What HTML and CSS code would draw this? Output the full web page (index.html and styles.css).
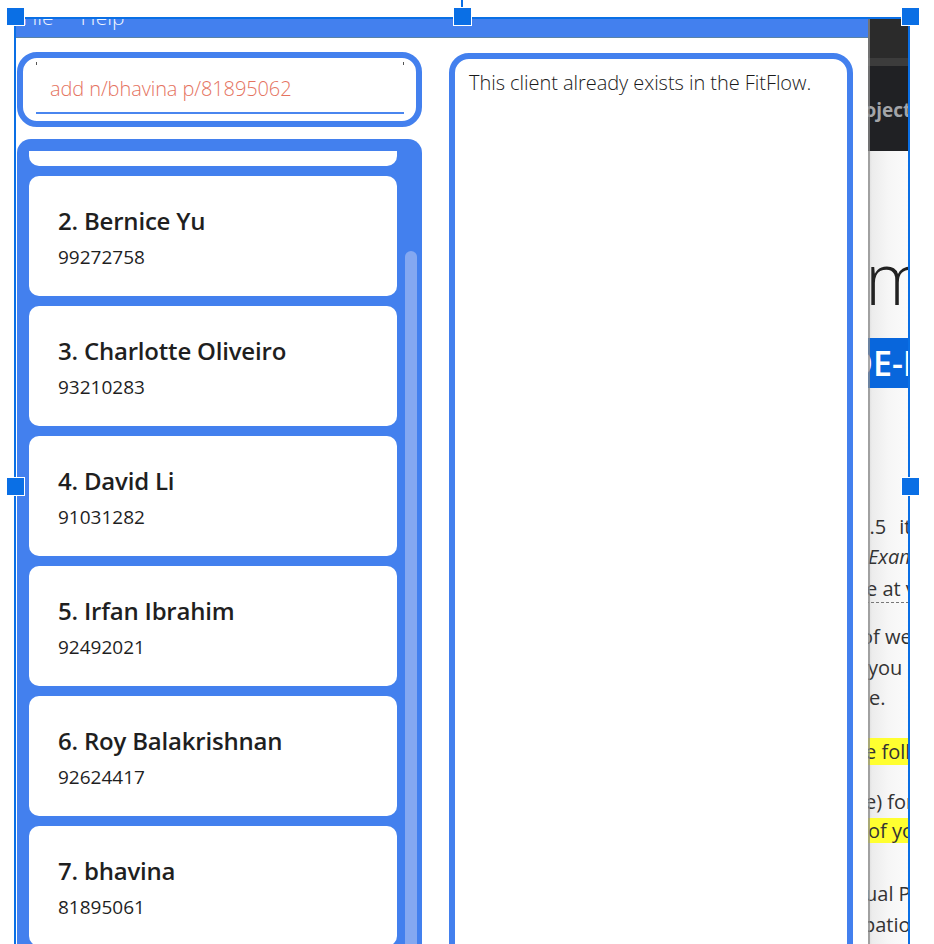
FILE: index.html
```html
<!DOCTYPE html>
<html>
<head>
<meta charset="utf-8">
<title>FitFlow</title>
<link rel="stylesheet" href="styles.css">
</head>
<body>
<div class="desk">
  <div class="app">
    <div class="menubar">
      <span class="menu menu-file">File</span>
      <span class="menu">Help</span>
    </div>
    <div class="app-body">
      <div class="left-col">
        <div class="cmd-box">
          <div class="cmd-field">
            <span class="cmd-text">add n/bhavina p/81895062</span>
          </div>
        </div>
        <div class="list-panel">
          <div class="list-viewport">
            <div class="card card-first">
              <div class="card-name">1. Alex Yeoh</div>
              <div class="card-phone">87438807</div>
            </div>
            <div class="card">
              <div class="card-name">2. Bernice Yu</div>
              <div class="card-phone">99272758</div>
            </div>
            <div class="card">
              <div class="card-name">3. Charlotte Oliveiro</div>
              <div class="card-phone">93210283</div>
            </div>
            <div class="card">
              <div class="card-name">4. David Li</div>
              <div class="card-phone">91031282</div>
            </div>
            <div class="card">
              <div class="card-name">5. Irfan Ibrahim</div>
              <div class="card-phone">92492021</div>
            </div>
            <div class="card">
              <div class="card-name">6. Roy Balakrishnan</div>
              <div class="card-phone">92624417</div>
            </div>
            <div class="card">
              <div class="card-name">7. bhavina</div>
              <div class="card-phone">81895061</div>
            </div>
          </div>
          <div class="scroll-track"><div class="scroll-thumb"></div></div>
        </div>
      </div>
      <div class="result-panel">
        <p class="result-text">This client already exists in the FitFlow.</p>
      </div>
    </div>
  </div>
  <div class="browser">
    <div class="br-tabs"></div>
    <div class="br-sep"></div>
    <div class="br-nav"><span class="br-title">Project</span></div>
    <div class="br-page">
      <div class="pg-row pg-big">m</div>
      <div class="pg-row pg-band"><span class="band-text">DE-IT</span></div>
      <div class="pg-row pg-p1">1.5<span class="gap-it">it</span></div>
      <div class="pg-row pg-em">Example</div>
      <div class="pg-row pg-dash"><span class="dash">e at version</span></div>
      <div class="pg-row pg-of">of weeks</div>
      <div class="pg-row pg-you">you can</div>
      <div class="pg-row pg-e">ie.</div>
      <div class="pg-row pg-hl1">e follow</div>
      <div class="pg-row pg-for">e) for</div>
      <div class="pg-row pg-hl2">of your</div>
      <div class="pg-row pg-ual">ual Plan</div>
      <div class="pg-row pg-pat">pation</div>
    </div>
  </div>
</div>

<div class="frame">
  <div class="rot-line"></div>
  <div class="handle h-tl"></div>
  <div class="handle h-tm"></div>
  <div class="handle h-tr"></div>
  <div class="handle h-ml"></div>
  <div class="handle h-mr"></div>
</div>
</body>
</html>
```

FILE: styles.css
```css
* { box-sizing: border-box; }

html, body {
  margin: 0;
  padding: 0;
  background: #ffffff;
}

body {
  position: relative;
  width: 934px;
  height: 944px;
  overflow: hidden;
  font-family: "Open Sans", "Noto Sans", sans-serif;
}

.desk {
  display: flex;
  align-items: flex-start;
  padding: 17px 0 0 15px;
  height: 944px;
}

/* ---------- App window ---------- */
.app {
  width: 853px;
  height: 1000px;
  display: flex;
  flex-direction: column;
  background: #ffffff;
  flex: none;
}

.menubar {
  height: 21px;
  background: #4380ee;
  border-bottom: 1px solid #5a83a6;
  display: flex;
  align-items: flex-start;
  gap: 27px;
  padding-left: 6px;
  overflow: hidden;
  flex: none;
}

.menu {
  font-size: 21px;
  line-height: 20px;
  color: #f2f6fe;
  margin-top: -10px;
  font-weight: 300;
}

.menu-file { margin-left: 1px; }

.app-body {
  flex: 1;
  display: flex;
  gap: 27px;
  padding: 14px 15px 0 2px;
}

.left-col {
  width: 405px;
  display: flex;
  flex-direction: column;
  flex: none;
}

.cmd-box {
  height: 75px;
  border: 6px solid #4380ee;
  border-radius: 20px;
  background: #fff;
  padding: 4px 12px 0 13px;
  flex: none;
}

.cmd-field {
  position: relative;
  height: 52px;
  border-bottom: 2px solid #4a86ef;
  padding-left: 14px;
  display: flex;
  align-items: center;
}

.cmd-field::before,
.cmd-field::after {
  content: "";
  position: absolute;
  top: 0;
  width: 1px;
  height: 3px;
  background: #555;
}
.cmd-field::before { left: 0; }
.cmd-field::after { right: 0; }

.cmd-text {
  font-size: 20px;
  font-weight: 300;
  letter-spacing: -0.1px;
  color: #e5735f;
  margin-top: 2px;
}

.list-panel {
  margin-top: 12px;
  flex: 1;
  background: #4380ee;
  border-radius: 14px 14px 0 0;
  display: flex;
  gap: 8px;
  padding: 12px 5px 0 12px;
  overflow: hidden;
}

.list-viewport {
  width: 368px;
  flex: none;
  overflow: hidden;
  display: flex;
  flex-direction: column;
  gap: 10px;
}

.card {
  height: 120px;
  flex: none;
  background: #ffffff;
  border-radius: 10px;
  padding: 30px 0 0 29px;
  color: #1f1f1f;
}

.card-first { margin-top: -105px; }

.card-name {
  font-size: 24px;
  line-height: 30px;
  font-weight: 600;
  letter-spacing: -0.2px;
}

.card-phone {
  font-size: 19px;
  line-height: 24px;
  margin-top: 9px;
}

.scroll-track {
  width: 12px;
  flex: none;
  padding-top: 100px;
}

.scroll-thumb {
  height: 900px;
  background: #84a8f1;
  border-radius: 6px;
}

.result-panel {
  width: 404px;
  flex: none;
  margin-top: 1px;
  border: 6px solid #4380ee;
  border-radius: 20px;
  padding: 10px 14px;
}

.result-text {
  margin: 0;
  font-size: 20px;
  font-weight: 300;
  letter-spacing: -0.05px;
  line-height: 28px;
  color: #1a1a1a;
}

/* ---------- Browser behind ---------- */
.browser {
  width: 41px;
  height: 1000px;
  flex: none;
  display: flex;
  flex-direction: column;
  overflow: hidden;
  position: relative;
}

.browser::before {
  content: "";
  position: absolute;
  left: 0;
  top: 0;
  bottom: 0;
  width: 2px;
  background: rgba(140, 140, 140, 0.75);
}

.br-tabs { height: 41px; background: #2b2b2b; flex: none; }
.br-sep { height: 8px; background: #3c3c3c; flex: none; }
.br-nav {
  height: 85px;
  background: #202124;
  flex: none;
  white-space: nowrap;
  padding-top: 32px;
}
.br-title {
  display: block;
  margin-left: -24px;
  font-size: 19px;
  line-height: 24px;
  font-weight: 700;
  color: #a3a5a8;
}

.br-page {
  flex: 1;
  background: linear-gradient(to right, #d9d9d9 0, #ececec 4px, #f6f6f6 20px, #fbfbfb 100%);
  display: flex;
  flex-direction: column;
  white-space: nowrap;
  color: #333;
  font-size: 20px;
}

.pg-row {
  height: 30px;
  line-height: 30px;
  flex: none;
}

.pg-big {
  height: 60px;
  line-height: 60px;
  font-size: 72px;
  font-weight: 300;
  color: #222;
  margin-top: 96px;
  margin-left: -3px;
}

.pg-band {
  height: 50px;
  line-height: 50px;
  margin-top: 31px;
  background: #0866dc;
  color: #fff;
  font-size: 34px;
  font-weight: 600;
}
.band-text { display: block; margin-left: -20px; }

.pg-p1 { margin-top: 124px; margin-left: -10px; }
.gap-it { margin-left: 13px; }

.pg-em { font-style: italic; margin-left: 0; }

.pg-dash { margin-top: 2px; }
.dash {
  display: inline-block;
  line-height: 26px;
  margin-left: -2px;
  border-bottom: 1px dashed #777;
}

.pg-of { margin-top: 18px; margin-left: -7px; }
.pg-you { margin-top: 1px; }
.pg-e { margin-left: -4px; }

.pg-hl1 {
  margin-top: 25px;
  height: 27px;
  line-height: 27px;
  background: #ffff30;
  margin-left: -3px;
}

.pg-for { margin-top: 22px; margin-left: -3px; }

.pg-hl2 {
  margin-top: 1px;
  height: 25px;
  line-height: 25px;
  background: #ffff30;
}

.pg-ual { margin-top: 36px; margin-left: -3px; }
.pg-pat { margin-top: 1px; margin-left: -5px; }

/* ---------- Selection frame (overlay) ---------- */
.frame {
  position: absolute;
  left: 14px;
  top: 17px;
  width: 896px;
  height: 1000px;
  border: 2px solid #0a6fe5;
  pointer-events: none;
}

.rot-line {
  position: absolute;
  left: 445px;
  top: -19px;
  width: 2px;
  height: 12px;
  background: #0a6fe5;
}

.handle {
  position: absolute;
  width: 19px;
  height: 19px;
  background: #0a6fe5;
  border: 1px solid #ffffff;
}

.h-tl { left: -10px; top: -12px; }
.h-tm { left: 437px; top: -12px; }
.h-tr { left: 885px; top: -12px; }
.h-ml { left: -10px; top: 458px; }
.h-mr { left: 885px; top: 458px; }
```
